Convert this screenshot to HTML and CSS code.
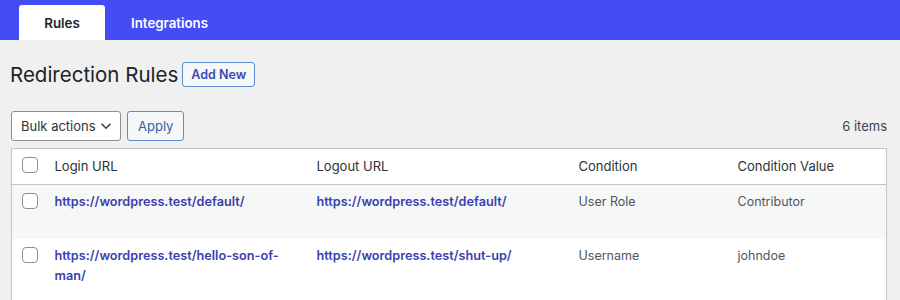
FILE: index.html
```html
<!DOCTYPE html>
<html lang="en">
    <head>
        <meta charset="utf-8">
        <title>Redirection Rules</title>
        <link rel="stylesheet" href="styles.css">
    </head>
    <body>
        <header class="topbar">
            <nav class="tabs">
                <a href="#" class="tab active">Rules</a>
                <a href="#" class="tab">Integrations</a>
            </nav>
        </header>

        <main class="wrap">
            <div class="title-row">
                <h1>Redirection Rules</h1>
                <a href="#" class="button add-new">Add New</a>
            </div>

            <div class="tablenav">
                <div class="bulk">
                    <div class="select">
                        <span>Bulk actions</span>
                        <svg width="12" height="8" viewBox="0 0 12 8"><path d="M1.5 1.8 6 6.2l4.5-4.4" fill="none" stroke="#3c434a" stroke-width="1.6"/></svg>
                    </div>
                    <button class="button apply">Apply</button>
                </div>
                <span class="count">6 items</span>
            </div>

            <table class="list">
                <thead>
                    <tr>
                        <th class="check"><span class="box"></span></th>
                        <th class="col-login">Login URL</th>
                        <th class="col-logout">Logout URL</th>
                        <th class="col-cond">Condition</th>
                        <th class="col-value">Condition Value</th>
                    </tr>
                </thead>
                <tbody>
                    <tr class="alt">
                        <td class="check"><span class="box"></span></td>
                        <td><a href="#">https://wordpress.test/default/</a><div class="row-actions">Edit | Delete</div></td>
                        <td><a href="#">https://wordpress.test/default/</a></td>
                        <td>User Role</td>
                        <td>Contributor</td>
                    </tr>
                    <tr>
                        <td class="check"><span class="box"></span></td>
                        <td><a href="#">https://wordpress.test/hello-son-of-man/</a><div class="row-actions">Edit | Delete</div></td>
                        <td><a href="#">https://wordpress.test/shut-up/</a></td>
                        <td>Username</td>
                        <td>johndoe</td>
                    </tr>
                </tbody>
            </table>
        </main>
    </body>
</html>
```

FILE: styles.css
```css
*, *::before, *::after {
    box-sizing: border-box;
}

body {
    margin: 0;
    font-family: Inter, "Noto Sans", sans-serif;
    font-size: 13px;
    color: #3c434a;
    background-color: #f0f0f1;
}

/* Top tab bar */
.topbar {
    background-color: #444cf6;
    height: 40px;
}

.tabs {
    display: flex;
    height: 100%;
    padding: 5px 0 0 19px;
}

.tab {
    display: flex;
    align-items: center;
    justify-content: center;
    padding: 0 26px;
    color: #fff;
    font-weight: 600;
    font-size: 13.3px;
    text-decoration: none;
    border-radius: 3px 3px 0 0;
}

.tab.active {
    width: 86px;
    background-color: #fff;
    color: #1d2327;
}

/* Content */
.wrap {
    padding: 0 13px 0 11px;
}

.title-row {
    display: flex;
    align-items: center;
    gap: 4px;
    margin-top: 21px;
    height: 26px;
}

h1 {
    margin: 0;
    margin-left: -1px;
    font-size: 20.5px;
    font-weight: 400;
    color: #1d2327;
}

.button {
    display: inline-flex;
    align-items: center;
    border: 1px solid #5b8bd0;
    border-radius: 3px;
    background-color: #f6f7f7;
    color: #3a49b5;
    text-decoration: none;
    font: inherit;
}

.add-new {
    height: 25px;
    padding: 0 8px;
    font-size: 12.5px;
    font-weight: 600;
}

.tablenav {
    display: flex;
    justify-content: space-between;
    align-items: center;
    margin-top: 24px;
    height: 30px;
}

.bulk {
    display: flex;
    gap: 6px;
}

.select {
    display: flex;
    align-items: center;
    justify-content: space-between;
    width: 110px;
    height: 30px;
    padding: 0 8px 0 9px;
    background-color: #fff;
    border: 1px solid #8c8f94;
    border-radius: 3px;
    color: #2c3338;
    white-space: nowrap;
}

.apply {
    height: 30px;
    padding: 0 10px;
    font-size: 13px;
    color: #2f5fae;
}

.count {
    font-size: 13px;
    color: #3c434a;
}

/* Table */
.list {
    width: 100%;
    margin-top: 7px;
    border-collapse: collapse;
    background-color: #fff;
    border: 1px solid #c3c4c7;
    table-layout: fixed;
    box-shadow: 0 1px 1px rgba(0, 0, 0, 0.04);
}

.list th, .list td {
    text-align: left;
    vertical-align: top;
    padding: 7px 10px 8px;
    line-height: 20px;
}

.list th {
    font-weight: 400;
    font-size: 13px;
    color: #2c3338;
    height: 33px;
    border-bottom: 1px solid #c3c4c7;
    padding-top: 7px;
}

.list td {
    font-size: 12.5px;
    color: #50575e;
}

.list tr.alt td {
    background-color: #f6f7f7;
}

.list a {
    color: #3a3fb0;
    font-weight: 600;
    font-size: 12.7px;
    text-decoration: none;
}

.check {
    width: 33px;
}

.list th.check, .list td.check {
    padding: 8px 0 0 10px;
}

.list td.check {
    padding-top: 8px;
}

.col-login, .col-logout {
    width: 262px;
}

.col-cond {
    width: 159px;
}

.box {
    display: block;
    width: 16px;
    height: 16px;
    border: 1px solid #8c8f94;
    border-radius: 4px;
    background-color: #fff;
}

.row-actions {
    visibility: hidden;
    height: 19px;
    font-size: 13px;
}
```
